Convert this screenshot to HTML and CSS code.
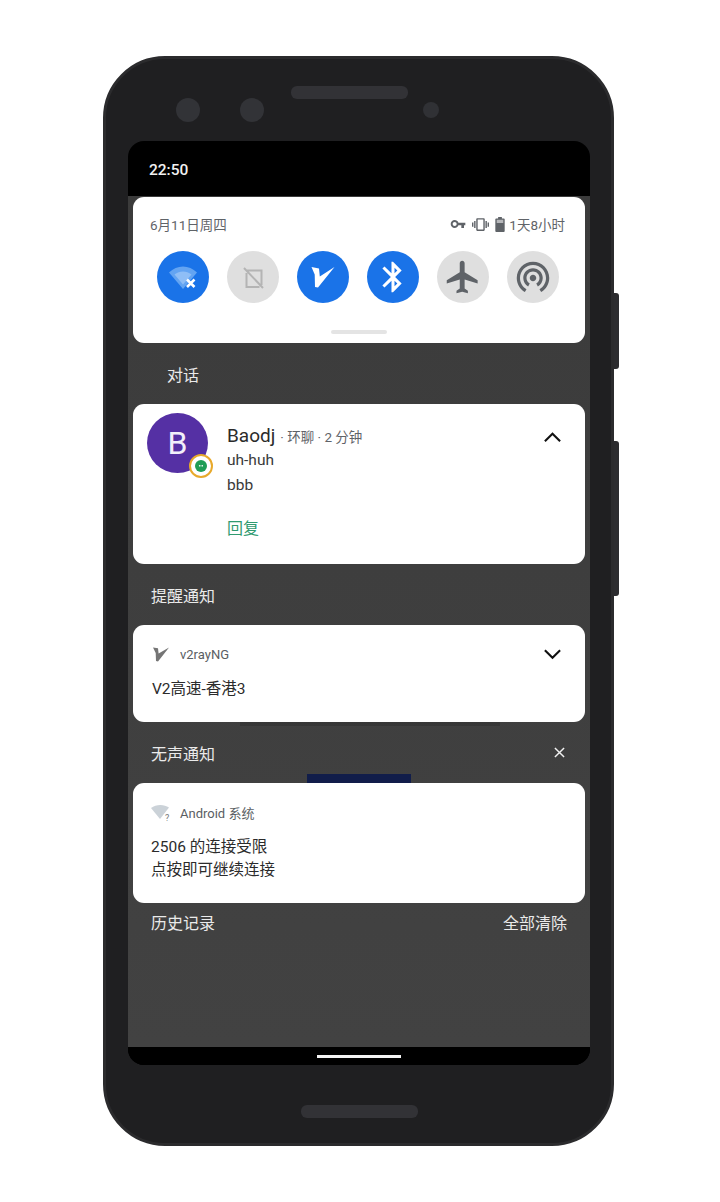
FILE: index.html
```html
<!DOCTYPE html>
<html lang="zh-CN">
<head>
<meta charset="utf-8">
<title>Android notifications</title>
<link rel="stylesheet" href="styles.css">
</head>
<body>
<div class="phone">
  <span class="side side-a"></span>
  <span class="side side-b"></span>
  <div class="top-bezel">
    <span class="lens lens-a"></span>
    <span class="lens lens-b"></span>
    <span class="speaker"></span>
    <span class="sensor"></span>
  </div>
  <div class="screen">
    <div class="statusbar">22:50</div>
    <div class="shade">
      <section class="card qs">
        <div class="qs-head">
          <span class="date">6月11日周四</span>
          <div class="sys">
            <svg class="i-key" viewBox="0 0 24 24"><path d="M12.65 10C11.83 7.67 9.61 6 7 6c-3.31 0-6 2.69-6 6s2.69 6 6 6c2.61 0 4.83-1.67 5.65-4H17v4h4v-4h2v-4H12.65zM7 15c-1.66 0-3-1.34-3-3s1.34-3 3-3 3 1.34 3 3-1.34 3-3 3z"/></svg>
            <svg class="i-vib" viewBox="0 0 24 24"><path d="M0 15h2V9H0v6zm3 2h2V7H3v10zm19-8v6h2V9h-2zm-3 8h2V7h-2v10zM16.5 3h-9C6.67 3 6 3.67 6 4.5v15c0 .83.67 1.5 1.5 1.5h9c.83 0 1.5-.67 1.5-1.5v-15c0-.83-.67-1.5-1.5-1.5zM16 19H8V5h8v14z"/></svg>
            <svg class="i-bat" viewBox="0 0 10 16"><path d="M3 0h4v1.5h2a1 1 0 0 1 1 1V15a1 1 0 0 1-1 1H1a1 1 0 0 1-1-1V2.500a1 1 0 0 1 1-1h2z"/><path class="bat-top" d="M1.500 3h7v3.500h-7z"/></svg>
            <span class="bat-text">1天8小时</span>
          </div>
        </div>
        <div class="tiles">
          <div class="tile on">
            <svg viewBox="0 0 52 52"><path class="wifi" d="M12 21.500C20 13.500 32 13.500 40 21.500L26 38z"/><path class="wifi-in" d="M17.500 23.500C22.500 19.500 29.500 19.500 34.500 23.500L26 33.500z"/><path class="tile-x" d="M30 28.500l7.500 7.500M37.500 28.500L30 36"/></svg>
          </div>
          <div class="tile">
            <svg viewBox="0 0 52 52"><path class="nosim" d="M20 19.500h8.500l6 0v14.500M32.500 36h-13V22M17 17l19 20"/></svg>
          </div>
          <div class="tile on">
            <svg viewBox="0 0 52 52"><path class="v-white" d="M14.500 16l7.500 1.500.8 8L37.500 16 21 36.500l-3-.6-.3-12.500z"/></svg>
          </div>
          <div class="tile on">
            <svg viewBox="0 0 24 24"><g transform="translate(3.600 3.600) scale(.7)"><path class="white" d="M17.710 7.710L12 2h-1v7.590L6.410 5 5 6.410 10.590 12 5 17.590 6.410 19 11 14.410V22h1l5.710-5.710-4.300-4.290 4.300-4.290zM13 5.830l1.880 1.880L13 9.590V5.830zm1.880 10.460L13 18.170v-3.760l1.880 1.880z"/></g></svg>
          </div>
          <div class="tile">
            <svg viewBox="0 0 24 24"><g transform="translate(3 3) scale(.75)"><path class="gray" d="M21 16v-2l-8-5V3.500c0-.83-.67-1.500-1.500-1.500S10 2.670 10 3.500V9l-8 5v2l8-2.500V19l-2 1.500V22l3.500-1 3.500 1v-1.500L13 19v-5.500l8 2.500z"/></g></svg>
          </div>
          <div class="tile">
            <svg viewBox="0 0 24 24"><g transform="translate(3 2.700) scale(.75)"><path class="gray" d="M12 11c-1.100 0-2 .9-2 2s.9 2 2 2 2-.9 2-2-.9-2-2-2zm6 2c0-3.310-2.690-6-6-6s-6 2.690-6 6c0 2.220 1.210 4.150 3 5.190l1-1.740c-1.190-.7-2-1.970-2-3.450 0-2.210 1.790-4 4-4s4 1.790 4 4c0 1.480-.81 2.750-2 3.450l1 1.740c1.790-1.040 3-2.970 3-5.190zM12 3C6.480 3 2 7.480 2 13c0 3.700 2.010 6.920 4.990 8.650l1-1.730C5.610 18.530 4 15.960 4 13c0-4.420 3.580-8 8-8s8 3.580 8 8c0 2.960-1.610 5.530-4 6.920l1 1.730c2.990-1.730 5-4.950 5-8.650 0-5.520-4.480-10-10-10z"/></g></svg>
          </div>
        </div>
        <div class="handle"></div>
      </section>

      <div class="label label-conv"><span>对话</span></div>

      <section class="card conv">
        <div class="avatar">B
          <span class="badge"><svg viewBox="0 0 24 24"><circle cx="12" cy="12" r="12" fill="#1f9d55"/><path class="white" d="M6.500 9.500a2 2 0 0 1 2-2h7a2 2 0 0 1 2 2v4a2 2 0 0 1-2 2H13l-2 2.500V15.500H8.500a2 2 0 0 1-2-2z" opacity="0"/><circle class="white" cx="9.500" cy="11.500" r="1.700"/><circle class="white" cx="14.500" cy="11.500" r="1.700"/></svg></span>
        </div>
        <div class="conv-body">
          <div class="conv-title"><span class="name">Baodj</span><span class="meta">· 环聊 · 2 分钟</span></div>
          <div class="conv-line">uh-huh</div>
          <div class="conv-line">bbb</div>
          <div class="reply">回复</div>
        </div>
        <svg class="chev" viewBox="0 0 20 12"><path d="M2 10.500l8-8 8 8"/></svg>
      </section>

      <div class="label"><span>提醒通知</span></div>

      <section class="card alert">
        <div class="app-row">
          <svg class="app-v" viewBox="0 0 16 15"><path d="M0 .5l5 .7.600 5.300L16 .5 5 14.500l-2-.5-.3-8z"/></svg>
          <span class="app-name">v2rayNG</span>
          <svg class="chev chev-down" viewBox="0 0 20 12"><path d="M2 2l8 8 8-8"/></svg>
        </div>
        <div class="body-text">V2高速-香港3</div>
      </section>

      <div class="label label-silent">
        <span>无声通知</span>
        <svg class="close" viewBox="0 0 12 12"><path d="M1 1l10 10M11 1L1 11"/></svg>
        <i class="peek"></i>
        <i class="smudge"></i>
      </div>

      <section class="card silent">
        <div class="app-row">
          <svg class="app-wifi" viewBox="0 0 21 17"><path d="M0 4C5 0 13 0 18 3.500L9 15z"/><text x="14" y="16.500">?</text></svg>
          <span class="app-name">Android 系统</span>
        </div>
        <div class="body-text body-two">2506 的连接受限<br>点按即可继续连接</div>
      </section>

      <div class="footer"><span>历史记录</span><span>全部清除</span></div>
    </div>
    <div class="navbar"><span class="home"></span></div>
  </div>
  <div class="bottom-bezel"><span class="speaker"></span></div>
</div>
</body>
</html>
```
FILE: styles.css
```css
* { box-sizing: border-box; }
html, body { margin: 0; padding: 0; background: #fff; }
body {
  width: 720px;
  height: 1202px;
  overflow: hidden;
  padding: 56px 0 0 103px;
  font-family: Roboto, "Noto Sans CJK SC", sans-serif;
}
.phone {
  position: relative;
  width: 511px;
  height: 1090px;
  background: #1f1f21;
  border: 3px solid #2b2b2d;
  border-radius: 62px;
  padding: 0 21px 0 22px;
  display: flex;
  flex-direction: column;
}
.side { position: absolute; left: 508px; width: 5px; background: #2c2c2f; border-radius: 0 3px 3px 0; }
.side-a { top: 234px; height: 76px; }
.side-b { top: 382px; height: 155px; }
.top-bezel { height: 82px; display: flex; position: relative; flex: none; }
.lens { width: 24px; height: 24px; border-radius: 50%; background: #323337; margin-top: 39px; flex: none; }
.lens-a { margin-left: 48px; }
.lens-b { margin-left: 40px; }
.speaker { width: 117px; height: 13px; border-radius: 6px; background: #323236; flex: none; display: block; }
.top-bezel .speaker { margin: 27px 0 0 27px; }
.sensor { width: 16px; height: 16px; border-radius: 50%; background: #303135; margin: 43px 0 0 15px; flex: none; }

.screen {
  width: 462px;
  height: 924px;
  flex: none;
  background: #000;
  border-radius: 16px;
  overflow: hidden;
  display: flex;
  flex-direction: column;
}
.statusbar {
  height: 55px;
  flex: none;
  padding: 18px 0 0 21px;
  color: #f1f1f1;
  font-size: 15.5px;
  line-height: 22px;
  font-weight: 500;
}
.shade {
  flex: 1;
  background: linear-gradient(#3b3b3b, #424242);
  padding-top: 1px;
  display: flex;
  flex-direction: column;
}
.card {
  margin: 0 5px;
  background: #fff;
  border-radius: 11px;
  flex: none;
  position: relative;
}
.qs { height: 146px; padding: 16px 20px 0 17px; }
.qs-head { display: flex; justify-content: space-between; align-items: center; height: 22px; color: #5f6368; font-size: 13.500px; }
.sys { display: flex; align-items: center; }
.sys svg { fill: #5f6368; display: block; }
.i-key { width: 16px; height: 16px; margin-right: 6px; }
.i-vib { width: 17px; height: 17px; margin-right: 6px; }
.i-bat { width: 10px; height: 15px; margin-right: 4px; }
.bat-top { fill: #fff; opacity: .55; }
.tiles { display: flex; gap: 18px; margin: 16px 0 0 7px; }
.tile { width: 52px; height: 52px; border-radius: 50%; background: #dfdfdf; flex: none; }
.tile.on { background: #1a73e8; }
.tile svg { width: 52px; height: 52px; display: block; }
.wifi { fill: #63a4f2; }
.wifi-in { fill: #8fbef6; }
.tile-x { fill: none; stroke: #fff; stroke-width: 2.600; }
.nosim { fill: none; stroke: #b4b4b4; stroke-width: 2; }
.v-white, .white { fill: #fff; }
.gray { fill: #5f6368; }
.handle { position: absolute; left: 198px; top: 133px; width: 56px; height: 4px; border-radius: 2px; background: #e4e4e4; }

.label {
  height: 61px;
  flex: none;
  padding: 0 23px;
  display: flex;
  align-items: center;
  color: #eaeaea;
  font-size: 16px;
  position: relative;
  justify-content: space-between;
}
.label-conv { padding-left: 39px; }
.close { width: 11px; height: 11px; margin-right: 2px; fill: none; stroke: #f2f2f2; stroke-width: 1.600; display: block; }
.peek { position: absolute; left: 179px; bottom: 0; width: 104px; height: 9px; background: #111d4a; }
.smudge { position: absolute; left: 112px; top: 0; width: 260px; height: 4px; background: #333; opacity: .7; }

.conv { height: 160px; display: flex; padding: 9px 0 0 14px; }
.avatar {
  width: 61px;
  height: 60px;
  border-radius: 50%;
  background: #5530a4;
  color: #f2effa;
  font-size: 32px;
  line-height: 60px;
  text-align: center;
  flex: none;
  position: relative;
}
.badge {
  position: absolute;
  left: 42px;
  top: 41px;
  width: 24px;
  height: 24px;
  border-radius: 50%;
  background: #fff;
  border: 2px solid #e8a92b;
  padding: 4px;
  display: block;
}
.badge svg { display: block; width: 12px; height: 12px; }
.conv-body { margin-left: 19px; padding-top: 11px; color: #333; flex: 1; }
.conv-title { display: flex; align-items: baseline; height: 24px; line-height: 24px; }
.name { font-size: 19px; color: #2b2b2b; }
.meta { font-size: 13.500px; color: #5f6368; margin-left: 5px; }
.conv-line { font-size: 15.500px; line-height: 24.500px; color: #3a3a3a; }
.reply { margin-top: 20px; font-size: 16px; line-height: 24px; color: #2f9a70; }
.chev { position: absolute; right: 23px; top: 27px; width: 19px; height: 12px; fill: none; stroke: #111; stroke-width: 2.200; display: block; }

.alert { height: 97px; padding: 17px 0 0 19px; }
.app-row { display: flex; align-items: center; height: 24px; position: relative; }
.app-v { width: 16px; height: 15px; fill: #757575; display: block; margin: 0 0 0 1px; flex: none; }
.app-name { margin-left: 11px; font-size: 13px; color: #5a5e63; }
.chev-down { right: 23px; top: 6px; }
.body-text { margin-top: 12px; font-size: 15.500px; line-height: 23px; color: #2b2b2b; }

.silent { height: 120px; padding: 17px 0 0 18px; }
.app-wifi { width: 21px; height: 17px; display: block; flex: none; fill: #cbd2d8; }
.app-wifi text { font-size: 9px; fill: #777; font-family: Roboto, sans-serif; }
.silent .app-name { margin-left: 8px; }
.body-two { margin-top: 12px; }

.footer {
  height: 38px;
  flex: none;
  padding: 0 23px;
  display: flex;
  justify-content: space-between;
  align-items: center;
  color: #eaeaea;
  font-size: 16px;
}
.navbar { height: 18px; flex: none; background: #000; display: flex; justify-content: center; padding-top: 8px; }
.home { width: 84px; height: 3px; background: #f5f5f5; display: block; }
.bottom-bezel { flex: 1; display: flex; justify-content: center; padding-top: 40px; }
```
